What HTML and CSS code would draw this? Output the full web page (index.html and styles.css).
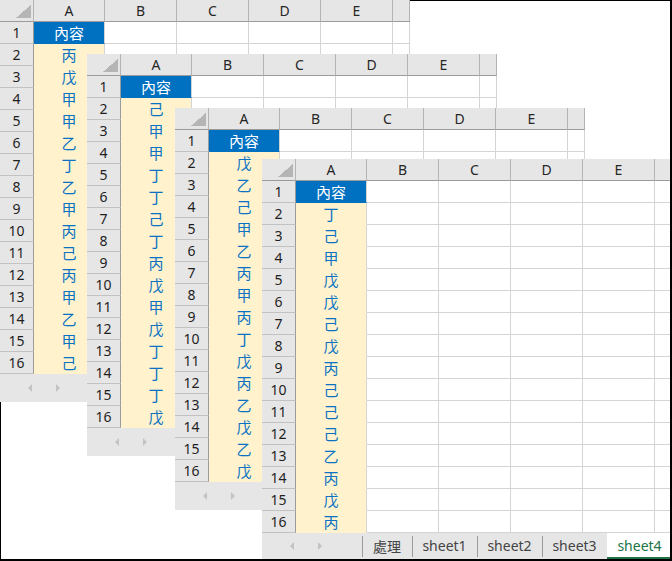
FILE: index.html
```html
<!DOCTYPE html>
<html lang="zh-Hant">
<head>
<meta charset="utf-8">
<title>sheets</title>
<link rel="stylesheet" href="styles.css">
</head>
<body>
<div class="frame">

<div class="win w1">
  <div class="row hrow"><span class="corner"></span><span>A</span><span>B</span><span>C</span><span>D</span><span>E</span><span></span></div>
  <div class="row"><span class="rh">1</span><span class="ca sel">內容</span><span></span><span></span><span></span><span></span><span></span></div>
  <div class="row"><span class="rh">2</span><span class="ca">丙</span><span></span><span></span><span></span><span></span><span></span></div>
  <div class="row"><span class="rh">3</span><span class="ca">戊</span><span></span><span></span><span></span><span></span><span></span></div>
  <div class="row"><span class="rh">4</span><span class="ca">甲</span><span></span><span></span><span></span><span></span><span></span></div>
  <div class="row"><span class="rh">5</span><span class="ca">甲</span><span></span><span></span><span></span><span></span><span></span></div>
  <div class="row"><span class="rh">6</span><span class="ca">乙</span><span></span><span></span><span></span><span></span><span></span></div>
  <div class="row"><span class="rh">7</span><span class="ca">丁</span><span></span><span></span><span></span><span></span><span></span></div>
  <div class="row"><span class="rh">8</span><span class="ca">乙</span><span></span><span></span><span></span><span></span><span></span></div>
  <div class="row"><span class="rh">9</span><span class="ca">甲</span><span></span><span></span><span></span><span></span><span></span></div>
  <div class="row"><span class="rh">10</span><span class="ca">丙</span><span></span><span></span><span></span><span></span><span></span></div>
  <div class="row"><span class="rh">11</span><span class="ca">己</span><span></span><span></span><span></span><span></span><span></span></div>
  <div class="row"><span class="rh">12</span><span class="ca">丙</span><span></span><span></span><span></span><span></span><span></span></div>
  <div class="row"><span class="rh">13</span><span class="ca">甲</span><span></span><span></span><span></span><span></span><span></span></div>
  <div class="row"><span class="rh">14</span><span class="ca">乙</span><span></span><span></span><span></span><span></span><span></span></div>
  <div class="row"><span class="rh">15</span><span class="ca">甲</span><span></span><span></span><span></span><span></span><span></span></div>
  <div class="row"><span class="rh">16</span><span class="ca">己</span><span></span><span></span><span></span><span></span><span></span></div>
  <div class="sbar"><i class="arr left"></i><i class="arr right"></i></div>
</div>

<div class="win w2">
  <div class="row hrow"><span class="corner"></span><span>A</span><span>B</span><span>C</span><span>D</span><span>E</span><span></span></div>
  <div class="row"><span class="rh">1</span><span class="ca sel">內容</span><span></span><span></span><span></span><span></span><span></span></div>
  <div class="row"><span class="rh">2</span><span class="ca">己</span><span></span><span></span><span></span><span></span><span></span></div>
  <div class="row"><span class="rh">3</span><span class="ca">甲</span><span></span><span></span><span></span><span></span><span></span></div>
  <div class="row"><span class="rh">4</span><span class="ca">甲</span><span></span><span></span><span></span><span></span><span></span></div>
  <div class="row"><span class="rh">5</span><span class="ca">丁</span><span></span><span></span><span></span><span></span><span></span></div>
  <div class="row"><span class="rh">6</span><span class="ca">丁</span><span></span><span></span><span></span><span></span><span></span></div>
  <div class="row"><span class="rh">7</span><span class="ca">己</span><span></span><span></span><span></span><span></span><span></span></div>
  <div class="row"><span class="rh">8</span><span class="ca">丁</span><span></span><span></span><span></span><span></span><span></span></div>
  <div class="row"><span class="rh">9</span><span class="ca">丙</span><span></span><span></span><span></span><span></span><span></span></div>
  <div class="row"><span class="rh">10</span><span class="ca">戊</span><span></span><span></span><span></span><span></span><span></span></div>
  <div class="row"><span class="rh">11</span><span class="ca">甲</span><span></span><span></span><span></span><span></span><span></span></div>
  <div class="row"><span class="rh">12</span><span class="ca">戊</span><span></span><span></span><span></span><span></span><span></span></div>
  <div class="row"><span class="rh">13</span><span class="ca">丁</span><span></span><span></span><span></span><span></span><span></span></div>
  <div class="row"><span class="rh">14</span><span class="ca">丁</span><span></span><span></span><span></span><span></span><span></span></div>
  <div class="row"><span class="rh">15</span><span class="ca">丁</span><span></span><span></span><span></span><span></span><span></span></div>
  <div class="row"><span class="rh">16</span><span class="ca">戊</span><span></span><span></span><span></span><span></span><span></span></div>
  <div class="sbar"><i class="arr left"></i><i class="arr right"></i></div>
</div>

<div class="win w3">
  <div class="row hrow"><span class="corner"></span><span>A</span><span>B</span><span>C</span><span>D</span><span>E</span><span></span></div>
  <div class="row"><span class="rh">1</span><span class="ca sel">內容</span><span></span><span></span><span></span><span></span><span></span></div>
  <div class="row"><span class="rh">2</span><span class="ca">戊</span><span></span><span></span><span></span><span></span><span></span></div>
  <div class="row"><span class="rh">3</span><span class="ca">乙</span><span></span><span></span><span></span><span></span><span></span></div>
  <div class="row"><span class="rh">4</span><span class="ca">己</span><span></span><span></span><span></span><span></span><span></span></div>
  <div class="row"><span class="rh">5</span><span class="ca">甲</span><span></span><span></span><span></span><span></span><span></span></div>
  <div class="row"><span class="rh">6</span><span class="ca">乙</span><span></span><span></span><span></span><span></span><span></span></div>
  <div class="row"><span class="rh">7</span><span class="ca">丙</span><span></span><span></span><span></span><span></span><span></span></div>
  <div class="row"><span class="rh">8</span><span class="ca">甲</span><span></span><span></span><span></span><span></span><span></span></div>
  <div class="row"><span class="rh">9</span><span class="ca">丙</span><span></span><span></span><span></span><span></span><span></span></div>
  <div class="row"><span class="rh">10</span><span class="ca">丁</span><span></span><span></span><span></span><span></span><span></span></div>
  <div class="row"><span class="rh">11</span><span class="ca">戊</span><span></span><span></span><span></span><span></span><span></span></div>
  <div class="row"><span class="rh">12</span><span class="ca">丙</span><span></span><span></span><span></span><span></span><span></span></div>
  <div class="row"><span class="rh">13</span><span class="ca">乙</span><span></span><span></span><span></span><span></span><span></span></div>
  <div class="row"><span class="rh">14</span><span class="ca">戊</span><span></span><span></span><span></span><span></span><span></span></div>
  <div class="row"><span class="rh">15</span><span class="ca">乙</span><span></span><span></span><span></span><span></span><span></span></div>
  <div class="row"><span class="rh">16</span><span class="ca">戊</span><span></span><span></span><span></span><span></span><span></span></div>
  <div class="sbar"><i class="arr left"></i><i class="arr right"></i></div>
</div>

<div class="win w4">
  <div class="row hrow"><span class="corner"></span><span>A</span><span>B</span><span>C</span><span>D</span><span>E</span><span></span></div>
  <div class="row"><span class="rh">1</span><span class="ca sel">內容</span><span></span><span></span><span></span><span></span><span></span></div>
  <div class="row"><span class="rh">2</span><span class="ca">丁</span><span></span><span></span><span></span><span></span><span></span></div>
  <div class="row"><span class="rh">3</span><span class="ca">己</span><span></span><span></span><span></span><span></span><span></span></div>
  <div class="row"><span class="rh">4</span><span class="ca">甲</span><span></span><span></span><span></span><span></span><span></span></div>
  <div class="row"><span class="rh">5</span><span class="ca">戊</span><span></span><span></span><span></span><span></span><span></span></div>
  <div class="row"><span class="rh">6</span><span class="ca">戊</span><span></span><span></span><span></span><span></span><span></span></div>
  <div class="row"><span class="rh">7</span><span class="ca">己</span><span></span><span></span><span></span><span></span><span></span></div>
  <div class="row"><span class="rh">8</span><span class="ca">戊</span><span></span><span></span><span></span><span></span><span></span></div>
  <div class="row"><span class="rh">9</span><span class="ca">丙</span><span></span><span></span><span></span><span></span><span></span></div>
  <div class="row"><span class="rh">10</span><span class="ca">己</span><span></span><span></span><span></span><span></span><span></span></div>
  <div class="row"><span class="rh">11</span><span class="ca">己</span><span></span><span></span><span></span><span></span><span></span></div>
  <div class="row"><span class="rh">12</span><span class="ca">己</span><span></span><span></span><span></span><span></span><span></span></div>
  <div class="row"><span class="rh">13</span><span class="ca">乙</span><span></span><span></span><span></span><span></span><span></span></div>
  <div class="row"><span class="rh">14</span><span class="ca">丙</span><span></span><span></span><span></span><span></span><span></span></div>
  <div class="row"><span class="rh">15</span><span class="ca">戊</span><span></span><span></span><span></span><span></span><span></span></div>
  <div class="row"><span class="rh">16</span><span class="ca">丙</span><span></span><span></span><span></span><span></span><span></span></div>
  <div class="tabbar">
    <div class="nav"><i class="arr left"></i><i class="arr right"></i></div>
    <div class="tab cjk">處理</div>
    <div class="tab">sheet1</div>
    <div class="tab">sheet2</div>
    <div class="tab">sheet3</div>
    <div class="tab active">sheet4</div>
  </div>
</div>

</div>
</body>
</html>
```

FILE: styles.css
```css
html, body {
  margin: 0;
  padding: 0;
  background: #fff;
}

.frame {
  position: relative;
  width: 672px;
  height: 561px;
  box-sizing: border-box;
  border-right: 2px solid #000;
  border-bottom: 2px solid #000;
  overflow: hidden;
  background: #fff;
  font-family: "Noto Sans", "Noto Sans CJK TC", sans-serif;
}

.frame::before {
  content: "";
  position: absolute;
  left: 0;
  top: 0;
  right: 0;
  bottom: 0;
  border-top: 1px solid #000;
  border-left: 1px solid #000;
  z-index: 0;
}

.win {
  position: absolute;
  width: 410px;
  background: #fff;
  display: flex;
  flex-direction: column;
}

.w1 { left: 0; top: 0; z-index: 1; }
.w2 { left: 87px; top: 54px; z-index: 2; }
.w3 { left: 175px; top: 108px; z-index: 3; }
.w4 { left: 262px; top: 159px; z-index: 4; }

.row {
  display: grid;
  grid-template-columns: 34px 71px 72px 72px 72px 72px 1fr;
  height: 22px;
}

.row > span {
  box-sizing: border-box;
  border-right: 1px solid #d4d4d4;
  border-bottom: 1px solid #d4d4d4;
  height: 22px;
  line-height: 21px;
  text-align: center;
  overflow: hidden;
  white-space: nowrap;
}

.hrow > span {
  background: #e6e6e6;
  border-right-color: #b4b4b4;
  border-bottom-color: #9b9b9b;
  color: #262626;
  font-size: 14px;
}

.hrow > .corner {
  background: linear-gradient(to top left, #b5b5b5 50%, rgba(181, 181, 181, 0) 51%) no-repeat right 2px bottom 3px / 15px 13px, #e6e6e6;
}

.row > .rh {
  background: #e6e6e6;
  border-right-color: #9b9b9b;
  border-bottom-color: #c2c2c2;
  color: #1f1f1f;
  font-size: 14px;
}

.row > .ca {
  background: #fff2cc;
  border-bottom-color: #fff2cc;
  color: #0a72c4;
  font-family: "Noto Sans CJK TC", sans-serif;
  font-size: 15px;
  line-height: 21px;
}

.row > .ca.sel {
  background: #0070c0;
  border-bottom-color: #0070c0;
  color: #fff;
}

.sbar {
  height: 28px;
  background: #e6e6e6;
  display: flex;
  align-items: center;
  padding-left: 28px;
  gap: 24px;
}

.arr {
  display: block;
  width: 0;
  height: 0;
  border-top: 4px solid transparent;
  border-bottom: 4px solid transparent;
}

.arr.left { border-right: 4px solid #c3c3c3; }
.arr.right { border-left: 4px solid #c3c3c3; }

.tabbar {
  height: 26px;
  background: #e6e6e6;
  display: flex;
  align-items: stretch;
}

.nav {
  width: 100px;
  display: flex;
  align-items: center;
  padding-left: 28px;
  gap: 24px;
  box-sizing: border-box;
}

.tab {
  width: 65px;
  flex: none;
  display: flex;
  align-items: center;
  justify-content: center;
  font-size: 14px;
  color: #444;
  position: relative;
  box-sizing: border-box;
  padding-bottom: 1px;
}

.tab::before {
  content: "";
  position: absolute;
  left: 0;
  top: 3px;
  bottom: 2px;
  width: 1px;
  background: #9b9b9b;
}

.tab.cjk {
  width: 50px;
  font-family: "Noto Sans CJK TC", sans-serif;
}

.tab.active {
  background: #fff;
  color: #217346;
  border-bottom: 2px solid #217346;
  padding-bottom: 0;
}

.tab.active::before {
  display: none;
}
```
